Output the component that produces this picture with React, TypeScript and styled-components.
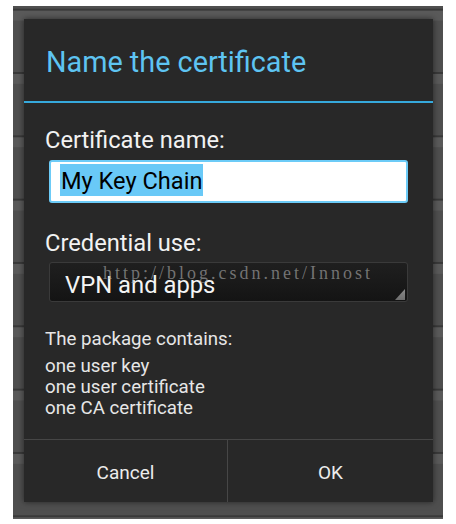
import React from "react";
import styled, { createGlobalStyle } from "styled-components";

const Global = createGlobalStyle`
  html, body { margin: 0; padding: 0; background: #ffffff; }
  body { font-family: Roboto, "Noto Sans", sans-serif; }
`;

const Frame = styled.div`
  position: relative;
  margin: 6px 0 0 13px;
  width: 430px;
  height: 513px;
  box-sizing: border-box;
  padding: 13px 0 0 11px;
  background-color: #4f4f4f;
  background-image: linear-gradient(
    to bottom,
    #393939 0px,
    #393939 2px,
    #5a5a5a 2px,
    #5a5a5a 12px,
    #4f4f4f 12px,
    #4f4f4f 100%
  );
  background-size: 100% 63.333px;
  background-position: 0 2.67px;
`;

const Dialog = styled.div`
  width: 409px;
  height: 483px;
  background: #282828;
  box-shadow: 0 0 6px rgba(0, 0, 0, 0.55);
  display: flex;
  flex-direction: column;
`;

const TitleBar = styled.div`
  height: 84px;
  box-sizing: border-box;
  padding: 3px 0 0 22px;
  line-height: 81px;
  font-size: 28.8px;
  color: #5ec4f2;
  border-bottom: 2px solid #36a9dc;
`;

const Body = styled.div`
  flex: 1;
  padding: 0 25px 0 21px;
  display: flex;
  flex-direction: column;
`;

const Label = styled.div<{ $top: number }>`
  margin-top: ${(p) => p.$top}px;
  font-size: 23.7px;
  line-height: 27px;
  color: #f2f2f2;
`;

const TextField = styled.div`
  margin: 6px 0 0 4px;
  height: 43px;
  box-sizing: border-box;
  border: 2px solid #6ccbf7;
  border-radius: 3px;
  background: #ffffff;
  padding: 2px 0 0 9px;
`;

const Selected = styled.span`
  display: inline-block;
  height: 32px;
  line-height: 34px;
  padding: 0 1px;
  font-size: 23.6px;
  color: #000000;
  background: #69c9f7;
`;

const Spinner = styled.div`
  position: relative;
  margin: 5px 0 0 4px;
  height: 40px;
  box-sizing: border-box;
  border: 1px solid #3a3a3a;
  border-radius: 3px;
  background: linear-gradient(to bottom, #1f1f1f, #141414);
  padding: 0 0 0 15px;
  font-size: 23.8px;
  line-height: 44px;
  color: #f4f4f4;
`;

const Corner = styled.span`
  position: absolute;
  right: 2px;
  bottom: 1px;
  width: 10px;
  height: 11px;
  background: linear-gradient(to bottom, #8a8a8a, #6e6e6e);
  clip-path: polygon(100% 0, 100% 100%, 0 100%);
`;

const Info = styled.div`
  margin-top: 26px;
  font-size: 18.7px;
  line-height: 23px;
  color: #e6e6e6;
`;

const InfoList = styled.div`
  margin-top: 5px;
  font-size: 18.7px;
  line-height: 21px;
  color: #e6e6e6;
`;

const ButtonBar = styled.div`
  height: 63px;
  box-sizing: border-box;
  border-top: 1px solid #464646;
  display: grid;
  grid-template-columns: 204px 1fr;
`;

const DialogButton = styled.div<{ $divider?: boolean }>`
  display: flex;
  align-items: center;
  justify-content: center;
  padding-top: 3px;
  font-size: 19px;
  color: #ececec;
  border-right: ${(p) => (p.$divider ? "1px solid #474747" : "none")};
`;

const Watermark = styled.div`
  position: absolute;
  left: 90px;
  top: 258px;
  font-family: "Liberation Serif", serif;
  font-size: 18px;
  line-height: 18px;
  letter-spacing: 3px;
  color: rgba(175, 175, 175, 0.6);
  pointer-events: none;
  white-space: nowrap;
`;

export default function App() {
  return (
    <>
      <Global />
      <Frame>
        <Dialog>
          <TitleBar>Name the certificate</TitleBar>
          <Body>
            <Label $top={24}>Certificate name:</Label>
            <TextField>
              <Selected>My Key Chain</Selected>
            </TextField>
            <Label $top={27}>Credential use:</Label>
            <Spinner>
              VPN and apps
              <Corner />
            </Spinner>
            <Info>The package contains:</Info>
            <InfoList>
              <div>one user key</div>
              <div>one user certificate</div>
              <div>one CA certificate</div>
            </InfoList>
          </Body>
          <ButtonBar>
            <DialogButton $divider>Cancel</DialogButton>
            <DialogButton>OK</DialogButton>
          </ButtonBar>
        </Dialog>
        <Watermark>http://blog.csdn.net/Innost</Watermark>
      </Frame>
    </>
  );
}
